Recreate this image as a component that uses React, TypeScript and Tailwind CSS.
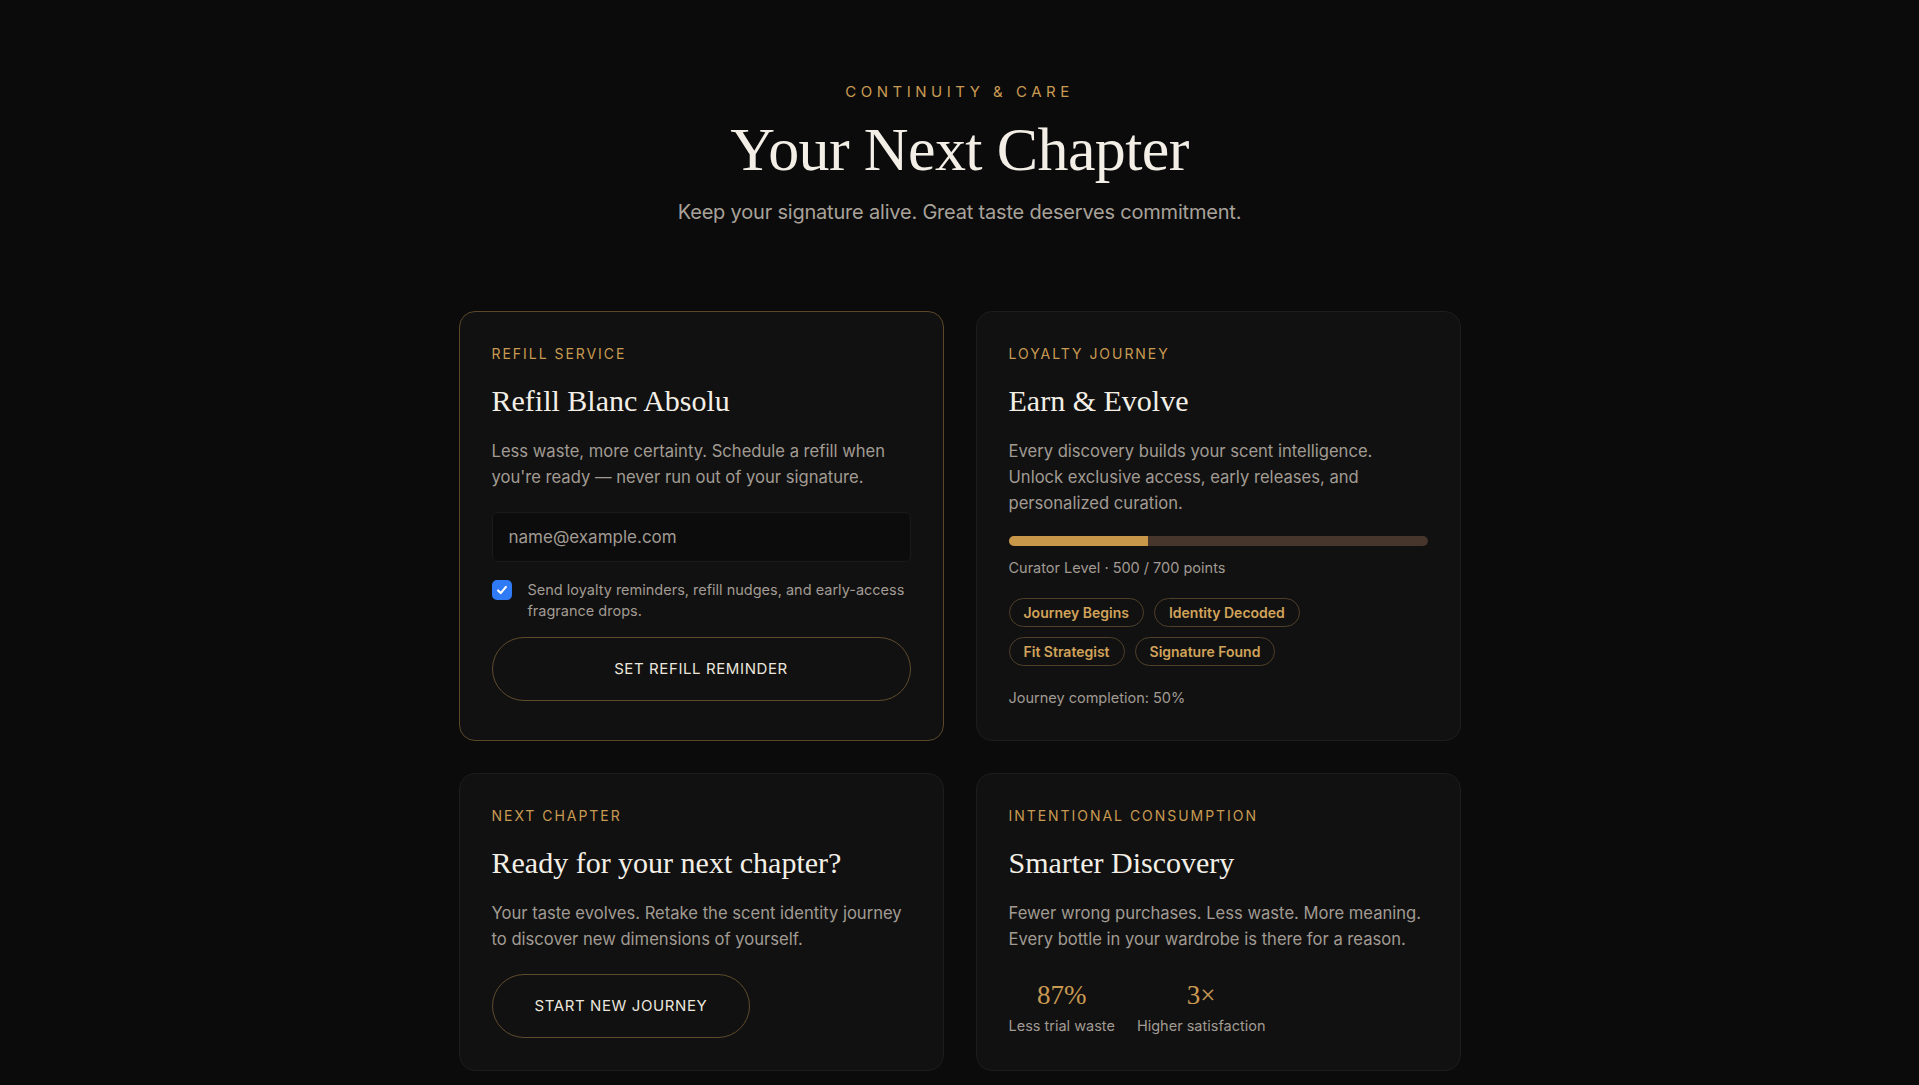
import { ReactNode } from "react";

const sans = { fontFamily: "Inter, Lato, sans-serif" };
const serif = { fontFamily: "'Liberation Serif', 'DejaVu Serif', serif" };

const Label = ({ children }: { children: ReactNode }) => (
  <p className="text-sm leading-5 tracking-[0.14em] uppercase text-[#c99a52]">{children}</p>
);

const Title = ({ children }: { children: ReactNode }) => (
  <h3 style={serif} className="mt-[17px] text-[30px] leading-[40px] text-[#f3efe7]">{children}</h3>
);

// each line kept on its own row so the copy breaks the same way at any font
const Desc = ({ lines }: { lines: string[] }) => (
  <p className="mt-[17px] text-[16.6px] leading-[26px] text-[#a19b93]">
    {lines.map((l) => (
      <span key={l} className="block whitespace-nowrap">{l}</span>
    ))}
  </p>
);

const Card = ({ highlight, children }: { highlight?: boolean; children: ReactNode }) => (
  <div
    className={
      highlight
        ? "rounded-2xl border border-[#5a4829] bg-[#111111] p-8 flex flex-col"
        : "rounded-2xl border border-[#1d1d1d] bg-[#111111] p-8 flex flex-col"
    }
  >
    {children}
  </div>
);

const Badge = ({ children }: { children: ReactNode }) => (
  <span className="h-[29px] px-3.5 flex items-center rounded-full border border-[#4f4029] text-sm font-semibold text-[#d2a35a]">
    {children}
  </span>
);

const Stat = ({ value, label }: { value: string; label: string }) => (
  <div className="flex flex-col items-center">
    <span style={serif} className="text-[27px] leading-[34px] text-[#c99a52]">{value}</span>
    <span className="mt-[4px] text-[14.5px] leading-5 text-[#a19b93]">{label}</span>
  </div>
);

export default function App() {
  const points = 500;

  return (
    <div style={sans} className="min-h-screen bg-[#0b0b0b] flex flex-col items-center pt-[82px] pb-4">
      <div className="flex flex-col items-center text-center">
        <p className="text-[15px] leading-5 tracking-[0.3em] text-[#c99a52]">CONTINUITY &amp; CARE</p>
        <h1 style={serif} className="mt-[12px] text-[62px] leading-[70px] tracking-[-0.01em] text-[#f3efe7]">
          Your Next Chapter
        </h1>
        <p className="mt-[14px] text-[20px] leading-7 tracking-[-0.01em] text-[#a8a29a]">
          Keep your signature alive. Great taste deserves commitment.
        </p>
      </div>

      <div className="mt-[85px] w-[1002px] grid grid-cols-2 gap-8">
        <Card highlight>
          <Label>Refill Service</Label>
          <Title>Refill Blanc Absolu</Title>
          <Desc
            lines={[
              "Less waste, more certainty. Schedule a refill when",
              "you're ready — never run out of your signature.",
            ]}
          />
          <input
            type="email"
            placeholder="name@example.com"
            className="mt-[22px] h-[50px] w-full rounded-md border border-[#1a1a1a] bg-[#0c0c0c] px-4 text-[17px] text-[#e8e4dc] placeholder:text-[#a19b93] outline-none"
          />
          <label className="mt-[17px] flex items-start gap-4">
            <span className="mt-[1px] w-5 h-5 shrink-0 rounded-[5px] bg-[#2f7bf5] flex items-center justify-center">
              <svg viewBox="0 0 16 16" className="w-3.5 h-3.5" fill="none" stroke="white" strokeWidth="2.4" strokeLinecap="round" strokeLinejoin="round">
                <path d="M3.5 8.5l3 3 6-7" />
              </svg>
            </span>
            <span className="text-[14.5px] leading-[21px] text-[#a19b93]">
              Send loyalty reminders, refill nudges, and early-access fragrance drops.
            </span>
          </label>
          <button className="mt-4 h-16 w-full rounded-full border border-[#5e4b2c] text-[15px] tracking-[0.04em] text-[#ece7de]">
            SET REFILL REMINDER
          </button>
        </Card>

        <Card>
          <Label>Loyalty Journey</Label>
          <Title>Earn &amp; Evolve</Title>
          <Desc
            lines={[
              "Every discovery builds your scent intelligence.",
              "Unlock exclusive access, early releases, and",
              "personalized curation.",
            ]}
          />
          <div className="mt-5 h-2.5 w-full rounded-full bg-[#46362c] overflow-hidden">
            <div className="h-full bg-[#c9974a]" style={{ width: `${(points / 1500) * 100}%` }} />
          </div>
          <p className="mt-3 text-[14.5px] leading-5 text-[#a19b93]">Curator Level · 500 / 700 points</p>
          <div className="mt-5 flex flex-col gap-2.5">
            <div className="flex gap-2.5">
              <Badge>Journey Begins</Badge>
              <Badge>Identity Decoded</Badge>
            </div>
            <div className="flex gap-2.5">
              <Badge>Fit Strategist</Badge>
              <Badge>Signature Found</Badge>
            </div>
          </div>
          <p className="mt-[22px] text-[14.5px] leading-5 text-[#a19b93]">Journey completion: 50%</p>
        </Card>

        <Card>
          <Label>Next Chapter</Label>
          <Title>Ready for your next chapter?</Title>
          <Desc
            lines={[
              "Your taste evolves. Retake the scent identity journey",
              "to discover new dimensions of yourself.",
            ]}
          />
          <div className="mt-[22px]">
            <button className="h-16 px-[42px] rounded-full border border-[#5e4b2c] text-[15px] tracking-[0.04em] text-[#ece7de]">
              START NEW JOURNEY
            </button>
          </div>
        </Card>

        <Card>
          <Label>Intentional Consumption</Label>
          <Title>Smarter Discovery</Title>
          <Desc
            lines={[
              "Fewer wrong purchases. Less waste. More meaning.",
              "Every bottle in your wardrobe is there for a reason.",
            ]}
          />
          <div className="mt-[26px] flex gap-[22px]">
            <Stat value="87%" label="Less trial waste" />
            <Stat value="3×" label="Higher satisfaction" />
          </div>
        </Card>
      </div>
    </div>
  );
}
